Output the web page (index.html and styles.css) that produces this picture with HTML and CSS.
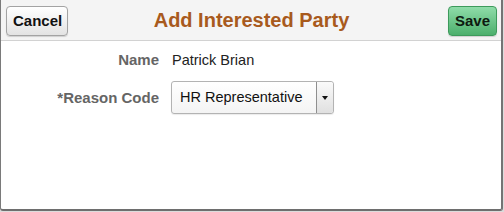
FILE: index.html
```html
<!DOCTYPE html>
<html lang="en">
<head>
  <meta charset="UTF-8">
  <title>Add Interested Party</title>
  <link rel="stylesheet" href="styles.css">
</head>
<body>

  <div class="dialog">
    <div class="dialog-header">
      <button class="btn btn-cancel">Cancel</button>
      <h1 class="dialog-title">Add Interested Party</h1>
      <button class="btn btn-save">Save</button>
    </div>

    <div class="dialog-body">
      <div class="form-grid">
        <span class="field-label">Name</span>
        <span class="field-value">Patrick Brian</span>

        <span class="field-label">*Reason Code</span>
        <div class="select-box">
          <span class="select-text">HR Representative</span>
          <span class="select-arrow"><span class="caret"></span></span>
        </div>
      </div>
    </div>
  </div>

</body>
</html>
```

FILE: styles.css
```css
body {
    margin: 0;
    background-color: #dcdcdc;
    font-family: "Liberation Sans", Arial, sans-serif;
}

.dialog {
    width: 500px;
    height: 209px;
    background-color: white;
    border-left: 1px solid #7a7a7a;
    border-right: 2px solid #747474;
    border-bottom: 2px solid #6e6e6e;
    border-radius: 0 0 3px 3px;
    display: flex;
    flex-direction: column;
}

.dialog-header {
    height: 40px;
    background-color: #f4f4f4;
    border-bottom: 1px solid #d2d2d2;
    display: grid;
    grid-template-columns: 1fr auto 1fr;
    align-items: center;
    padding: 0 4px 0 5px;
}

.dialog-title {
    margin: 0;
    font-size: 20px;
    font-weight: bold;
    color: #a85a1d;
}

.btn {
    height: 30px;
    margin-top: 1px;
    border-radius: 4px;
    font-family: "Liberation Sans", Arial, sans-serif;
    font-size: 15px;
    font-weight: bold;
    color: #111;
    cursor: pointer;
}

.btn-cancel {
    justify-self: start;
    width: 62px;
    border: 1px solid #a3a3a3;
    background: linear-gradient(#ffffff, #e3e3e3);
    box-shadow: 0 1px 1px rgba(0, 0, 0, 0.15);
}

.btn-save {
    justify-self: end;
    width: 49px;
    border: 1px solid #3d9a5b;
    background: linear-gradient(#8fdca9, #4caf6c);
    box-shadow: 0 1px 1px rgba(0, 0, 0, 0.15);
    color: #0d1a10;
}

.dialog-body {
    flex: 1;
    padding-top: 10px;
}

.form-grid {
    display: grid;
    grid-template-columns: 158px auto;
    column-gap: 12px;
    row-gap: 13px;
    align-items: center;
    justify-items: start;
}

.field-label {
    justify-self: end;
    font-size: 15px;
    font-weight: bold;
    color: #656565;
}

.field-value {
    font-size: 14.5px;
    color: #222;
    padding-left: 1px;
}

.select-box {
    display: flex;
    width: 161px;
    height: 31px;
    border: 1px solid #b3b3b3;
    border-radius: 3px;
    background: linear-gradient(#ffffff, #f4f4f4);
    box-shadow: 0 1px 1px rgba(0, 0, 0, 0.08);
}

.select-text {
    flex: 1;
    font-size: 14.5px;
    color: #111;
    padding-left: 8px;
    line-height: 31px;
}

.select-arrow {
    width: 16px;
    border-left: 1px solid #8f8f8f;
    border-radius: 0 3px 3px 0;
    background: linear-gradient(#fafafa, #e0e0e0);
    display: flex;
    align-items: center;
    justify-content: center;
}

.caret {
    width: 0;
    height: 0;
    border-left: 3.5px solid transparent;
    border-right: 3.5px solid transparent;
    border-top: 4px solid #111;
}
```
